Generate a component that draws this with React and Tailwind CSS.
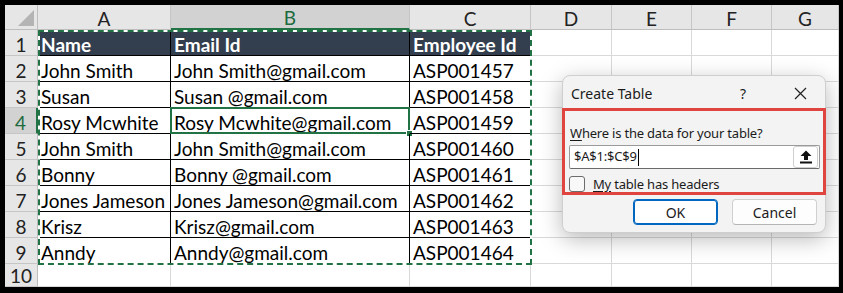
import React from 'react';

const COLS = ['A', 'B', 'C', 'D', 'E', 'F', 'G'];

const ROWS = [
  ['Name', 'Email Id', 'Employee Id'],
  ['John Smith', 'John Smith@gmail.com', 'ASP001457'],
  ['Susan', 'Susan @gmail.com', 'ASP001458'],
  ['Rosy Mcwhite', 'Rosy Mcwhite@gmail.com', 'ASP001459'],
  ['John Smith', 'John Smith@gmail.com', 'ASP001460'],
  ['Bonny', 'Bonny @gmail.com', 'ASP001461'],
  ['Jones Jameson', 'Jones Jameson@gmail.com', 'ASP001462'],
  ['Krisz', 'Krisz@gmail.com', 'ASP001463'],
  ['Anndy', 'Anndy@gmail.com', 'ASP001464'],
  ['', '', ''],
];

function Corner() {
  return (
    <div className="relative bg-[#e6e6e6] border-r border-b border-[#bdbdbd]">
      <svg className="absolute right-[3px] bottom-[3px]" width="16" height="16" viewBox="0 0 16 16">
        <polygon points="16,0 16,16 0,16" fill="#b4b4b4" />
      </svg>
    </div>
  );
}

function ColHeader({ letter }) {
  const active = letter === 'B';
  return (
    <div
      className={`flex items-end justify-center leading-[20px] border-r border-[#c6c6c6] ${
        active
          ? 'bg-[#d2d2d2] text-[#1d6b3e] border-b-2 border-b-[#217346]'
          : 'bg-[#e6e6e6] text-[#222] border-b border-b-[#bdbdbd]'
      }`}
    >
      {letter}
    </div>
  );
}

function RowHeader({ n }) {
  const active = n === 4;
  return (
    <div
      className={`flex items-end justify-center leading-[20px] border-b border-[#c6c6c6] ${
        active
          ? 'bg-[#d2d2d2] text-[#1d6b3e] border-r-2 border-r-[#217346]'
          : 'bg-[#e6e6e6] text-[#222] border-r border-r-[#bdbdbd]'
      }`}
    >
      {n}
    </div>
  );
}

function Cell({ text, row, col }) {
  const inTable = row <= 9 && col < 3;
  const head = row === 1 && col < 3;
  const selected = row === 4 && col === 1;
  return (
    <div
      className={`relative flex items-end pl-[3px] leading-[20px] whitespace-nowrap border-r border-b ${
        inTable ? 'border-black' : 'border-[#d9d9d9]'
      } ${head ? 'bg-[#333f4f] text-white font-bold' : 'text-black'}`}
    >
      {text}
      {selected && (
        <>
          <div className="absolute -left-[1px] -top-[1px] -right-[1px] -bottom-[1px] border-2 border-[#217346]" />
          <div className="absolute -right-[4px] -bottom-[4px] w-[7px] h-[7px] bg-[#217346] border border-white" />
        </>
      )}
    </div>
  );
}

function UploadIcon() {
  return (
    <svg width="12" height="14" viewBox="0 0 12 14">
      <path d="M6 0.5 L11.5 6 H8 V10 H4 V6 H0.5 Z" fill="#111" />
      <rect x="0" y="11.5" width="12" height="2" fill="#111" />
    </svg>
  );
}

function CloseIcon() {
  return (
    <svg width="13" height="13" viewBox="0 0 13 13">
      <path d="M1 1 L12 12 M12 1 L1 12" stroke="#222" strokeWidth="1.2" />
    </svg>
  );
}

function CreateTableDialog() {
  return (
    <div
      className="absolute left-[557px] top-[70px] w-[264px] h-[158px] rounded-[8px] bg-[#f3f3f3] border border-[#cfcfcf] shadow-[0_6px_22px_rgba(0,0,0,0.28)] text-[#1b1b1b] flex flex-col"
      style={{ fontFamily: '"Noto Sans", "Open Sans", sans-serif' }}
    >
      <div className="h-[32px] flex items-center pl-[8px] text-[14px]">
        <span className="flex-1 pt-[2px]">Create Table</span>
        <span className="w-[16px] text-center mr-[43px] pt-[2px]">?</span>
        <span className="mr-[18px] flex items-center pt-[2px]">
          <CloseIcon />
        </span>
      </div>
      <div className="-mx-[1px] h-[87px] border-[3px] border-[#e0443e] pl-[4px] pr-[3px] pt-[12px] flex flex-col text-[13px] tracking-[-0.2px]">
        <div className="leading-[20px] pl-[1px]">
          <span className="underline underline-offset-2">W</span>here is the data for your table?
        </div>
        <div className="mt-[2px] h-[25px] bg-white border border-[#9a9a9a] border-b-[#6a6a6a] rounded-[2px] flex items-center pl-[4px] pr-[1px]">
          <span className="flex-1 flex items-center">
            $A$1:$C$9<span className="inline-block w-[1px] h-[17px] bg-black ml-[1px]" />
          </span>
          <span className="w-[25px] h-[22px] rounded-[3px] border border-[#cfcfcf] bg-white flex items-center justify-center">
            <UploadIcon />
          </span>
        </div>
        <div className="mt-[6px] flex items-center">
          <span className="w-[16px] h-[16px] rounded-[3px] border border-[#6b6b6b] bg-[#f8f8f8]" />
          <span className="ml-[8px] leading-[18px]">
            <span className="underline underline-offset-2">My</span> table has headers
          </span>
        </div>
      </div>
      <div className="flex justify-end gap-[14px] pr-[8px] mt-[4px] text-[14px]">
        <button className="w-[85px] h-[26px] rounded-[4px] bg-white border border-[#0067c0] shadow-[inset_0_0_0_1px_#0067c0]">
          OK
        </button>
        <button className="w-[85px] h-[26px] rounded-[4px] bg-[#fdfdfd] border border-[#d0d0d0] border-b-[#b5b5b5]">
          Cancel
        </button>
      </div>
    </div>
  );
}

export default function App() {
  return (
    <div className="w-[843px] h-[293px] bg-black pt-[5px] pl-[5px] pr-[4px] pb-[6px]">
      <div
        className="relative w-full h-full bg-white overflow-hidden text-[19px]"
        style={{ fontFamily: 'Lato, "Open Sans", sans-serif' }}
      >
        <div className="grid grid-cols-[33px_133px_239px_121px_81px_80px_80px_67px] grid-rows-[25px_repeat(9,26px)_23px]">
          <Corner />
          {COLS.map((c) => (
            <ColHeader key={c} letter={c} />
          ))}
          {ROWS.map((r, i) => (
            <React.Fragment key={i}>
              <RowHeader n={i + 1} />
              {COLS.map((c, j) => (
                <Cell key={c} row={i + 1} col={j} text={r[j] || ''} />
              ))}
            </React.Fragment>
          ))}
        </div>

        {/* copy marquee around A1:C9 */}
        <div className="absolute left-[33px] top-[25px] w-[494px] h-[235px] border-2 border-white pointer-events-none" />
        <div className="absolute left-[33px] top-[25px] w-[494px] h-[235px] border-2 border-dashed border-[#217346] pointer-events-none" />

        <CreateTableDialog />
      </div>
    </div>
  );
}
